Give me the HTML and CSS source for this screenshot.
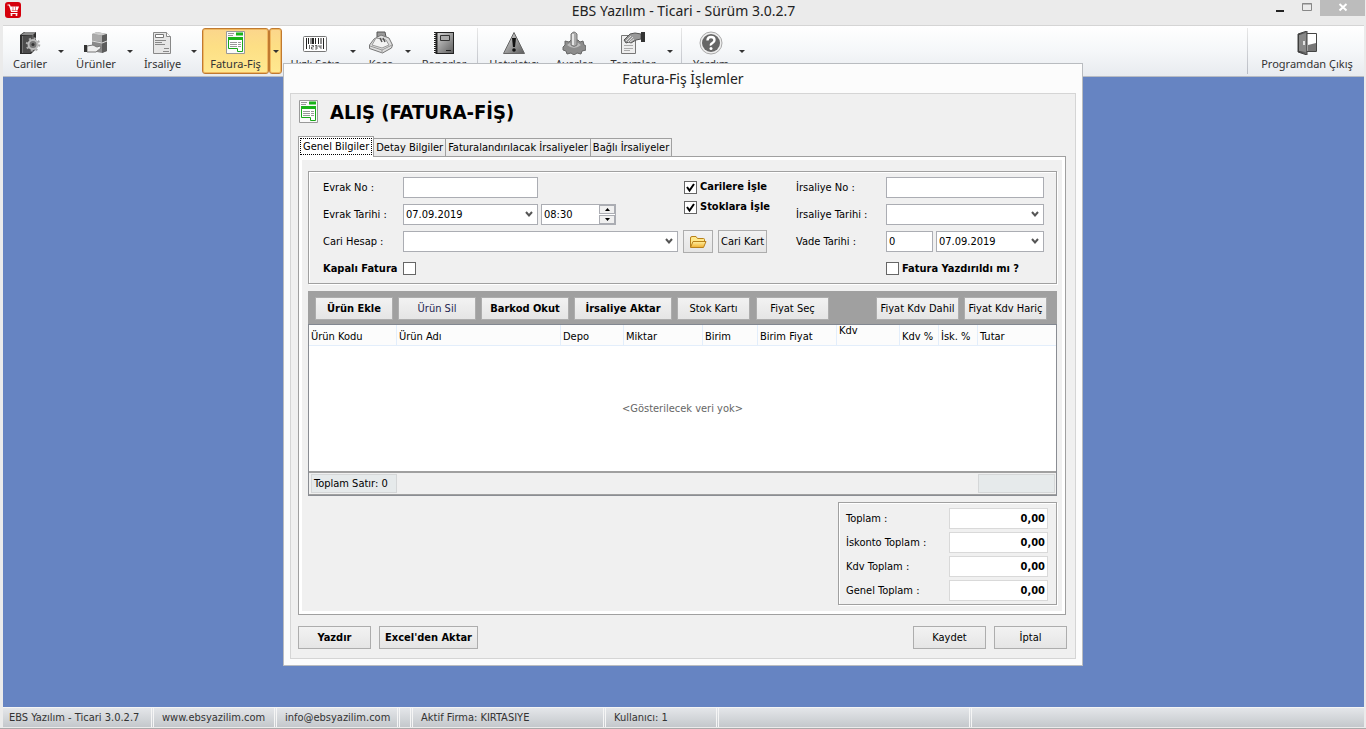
FILE: index.html
```html
<!DOCTYPE html>
<html lang="tr">
<head>
<meta charset="utf-8">
<title>EBS Yazılım - Ticari - Sürüm 3.0.2.7</title>
<link rel="stylesheet" href="styles.css">
</head>
<body>
<svg class="defs" aria-hidden="true">
  <defs>
    <linearGradient id="steel" x1="0" y1="0" x2="1" y2="1"><stop offset="0" stop-color="#dedede"/><stop offset="1" stop-color="#5c5c5c"/></linearGradient>
    <linearGradient id="dark" x1="0" y1="0" x2="1" y2="0"><stop offset="0" stop-color="#333"/><stop offset="1" stop-color="#777"/></linearGradient>
    <linearGradient id="gold" x1="0" y1="0" x2="0" y2="1"><stop offset="0" stop-color="#fff0a0"/><stop offset="1" stop-color="#f0b030"/></linearGradient>
    <symbol id="invoice" viewBox="0 0 20 24">
      <path d="M.5 .5h18v22H.5z" fill="#fafafa" stroke="#999"/>
      <path d="M2 2.500h6M2 4.500h5" stroke="#999"/>
      <path d="M10 1.500h7v3h-7z" fill="#19b219"/>
      <path d="M2.500 6.500h14v14h-5v-3h-9z" fill="#fff" stroke="#19a819"/>
      <path d="M2 7.500h15" stroke="#19b219" stroke-width="3"/>
      <path d="M4 11.500h7M4 13.500h7M4 15.500h7M12 11.500h3M12 13.500h3M12 15.500h3" stroke="#999"/>
    </symbol>
  </defs>
</svg>
<div class="window">
  <header class="titlebar">
    <svg class="app-icon" viewBox="0 0 16 16"><rect width="16" height="16" rx="3" fill="#d5000c"/><path d="M2.500 3h2l2 6.500h6" fill="none" stroke="#fff" stroke-width="1.200"/><path d="M5 4.500h9l-1.500 4H6.300z" fill="#fff"/><path d="M8 4.500v4M10.500 4.500v4" stroke="#d5000c" stroke-width=".5"/><path d="M5.500 11.500h7" stroke="#fff"/><circle cx="6.500" cy="13" r="1" fill="#fff"/><circle cx="11.500" cy="13" r="1" fill="#fff"/></svg>
    <h1 class="window-title">EBS Yazılım - Ticari - Sürüm 3.0.2.7</h1>
    <div class="window-buttons">
      <button class="win-btn" aria-label="Simge durumuna küçült"><svg viewBox="0 0 12 12"><path d="M2 9h8" stroke="#222" stroke-width="2"/></svg></button>
      <button class="win-btn" aria-label="Ekranı kapla"><svg viewBox="0 0 12 12"><path d="M1.500 1.500h9v7h-9zM1 2h10" fill="none" stroke="#888"/></svg></button>
      <button class="win-btn win-close" aria-label="Kapat"><svg viewBox="0 0 12 12"><path d="M2.500 2l7 6.500M9.500 2l-7 6.500" stroke="#fff" stroke-width="2"/></svg></button>
    </div>
  </header>

  <nav class="toolbar">
    <div class="tool"><button class="tool-main t-cariler"><svg viewBox="0 0 24 24"><path d="M2 4l4-3h12v17l-5 5H2z" fill="#2d2d2d"/><path d="M3 4l4-3h11l-3 3z" fill="#8a8a8a"/><path d="M4 5l11-1v16l-3 2H4z" fill="#4c4c4c"/><path d="M15 4v16M4.500 5v17" stroke="#777"/><circle cx="15" cy="13.500" r="6" fill="none" stroke="#aaa" stroke-width="2.500" stroke-dasharray="2 2.700"/><circle cx="15" cy="13.500" r="4.500" stroke="#bbb" stroke-width="2" fill="#777"/><circle cx="15" cy="13.500" r="1.500" fill="#333"/></svg><span>Cariler</span></button><button class="tool-drop" aria-label="Cariler menüsü"></button></div>
    <div class="tool"><button class="tool-main t-urunler"><svg viewBox="0 0 24 24"><path d="M8 3l5-2 10 2v17l-5 2-10-2z" fill="#888"/><path d="M8 3l5-2 10 2-5 1.500z" fill="#ccc"/><path d="M8 3l10 1.500V11L8 9.500z" fill="#aaa"/><path d="M8 11l10 1.500V21L8 20z" fill="#8a8a8a"/><path d="M18 4.500L23 3v17l-5 2z" fill="#5c5c5c"/><path d="M8 10l10 2 5-2" stroke="#ddd" fill="none"/><path d="M3 15l6-1 4 2 3-1 1 2-5 4H3z" fill="#eee" stroke="#777"/><path d="M0 14h3v7H0z" fill="#333"/></svg><span>Ürünler</span></button><button class="tool-drop" aria-label="Ürünler menüsü"></button></div>
    <div class="tool"><button class="tool-main t-irsaliye"><svg viewBox="0 0 24 24"><path d="M2.500 1.500h13l4 4v17h-17z" fill="#e6e6e6" stroke="#888"/><path d="M15.500 1.500v4h4" fill="#fff" stroke="#888"/><path d="M4.500 3.500h8v3h-8z" fill="#fff" stroke="#777"/><path d="M4 9.500h11M4 11.500h7M4 13.500h10M13 17.500h5M12 20.500h6" stroke="#888"/></svg><span>İrsaliye</span></button><button class="tool-drop" aria-label="İrsaliye menüsü"></button></div>
    <div class="tool active"><button class="tool-main t-fatura"><svg viewBox="0 0 20 24"><use href="#invoice"/></svg><span>Fatura-Fiş</span></button><button class="tool-drop" aria-label="Fatura-Fiş menüsü"></button></div>
    <div class="tool"><button class="tool-main t-satis"><svg viewBox="0 0 24 24"><rect x=".5" y="5.500" width="23" height="15" rx="1" fill="#fff" stroke="#777"/><path d="M3.500 7v11M5.500 7v6M8 7v6M12.500 7v6M15.500 7v6M18 7v6M20.500 7v11" stroke="#222"/><path d="M10 7v6" stroke="#222" stroke-width="2"/><path d="M6.500 14v4M8.500 14.500h2v1.500h-2v2h2M12 14.500h2v3.500h-2M12 16h2M16 14v2h2M18 14v4" fill="none" stroke="#444" stroke-width=".8"/></svg><span>Hızlı Satış</span></button><button class="tool-drop" aria-label="Hızlı Satış menüsü"></button></div>
    <div class="tool"><button class="tool-main t-kasa"><svg viewBox="0 0 24 24"><path d="M8 1h8l1 5H8z" fill="#999" stroke="#555"/><path d="M5 8l7-4 8 3 3.500 7-1 3-9 5L.5 17.500V14z" fill="#ddd" stroke="#777"/><path d="M1 15l12 4 10-5M13 19v3" stroke="#999" fill="none"/><path d="M7 7l10 2 3 5-7 3-10-3z" fill="#f3f3f3" stroke="#999"/><path d="M11 7l2 4M14 7l2 4" stroke="#555" stroke-width="1.500"/></svg><span>Kasa</span></button><button class="tool-drop" aria-label="Kasa menüsü"></button></div>
    <div class="tool"><button class="tool-main t-raporlar"><svg viewBox="0 0 24 24"><rect x="2.500" y="1.500" width="19" height="21" fill="url(#steel)" stroke="#222"/><path d="M4 1v22" stroke="#222" stroke-width="3"/><path d="M2 2v21" stroke="#fff" stroke-width="3" stroke-dasharray="1 1"/><path d="M8.500 4.500h9v5h-9z" fill="#aaa" stroke="#333"/><path d="M14 19.500h5" stroke="#222"/></svg><span>Raporlar</span></button></div>
    <div class="tool-sep"></div>
    <div class="tool"><button class="tool-main t-hatir"><svg viewBox="0 0 24 24"><path d="M12 1.500l10.500 21h-21z" fill="url(#steel)" stroke="#666" stroke-linejoin="round"/><path d="M10 7h4l-1 9h-2z" fill="#111"/><circle cx="12" cy="19" r="1.800" fill="#111"/></svg><span>Hatırlatıcı</span></button></div>
    <div class="tool"><button class="tool-main t-ayarlar"><svg viewBox="0 0 24 24"><path d="M3 10l4 1 2-2h7l2 2 3-1 1 4 2 1v4l-4 1-1 3-4-1-3 2-3-2-4 1-1-3-3-1v-3l2-2z" fill="#8c8c8c" stroke="#666"/><path d="M5 14q7-7 14 0-7 6-14 0z" fill="#bbb"/><path d="M9 3q3-4 6 0v11q-3 3-6 0z" fill="#aaa" stroke="#777"/><path d="M11 3v11" stroke="#e5e5e5" stroke-width="2"/></svg><span>Ayarlar</span></button></div>
    <div class="tool"><button class="tool-main t-tanimlar"><svg viewBox="0 0 24 24"><path d="M.5 4.500h14v18H.5z" fill="#eee" stroke="#777"/><path d="M3 14.500h9M3 17.500h9M3 19.500h6" stroke="#aaa"/><path d="M3 9l6-6 5-1 6 1v5l-5 1-5 3-2-1-3 1z" fill="#999" stroke="#555"/><path d="M5 10l5-5M7 11l5-5M9 11l4-3" stroke="#ddd"/><path d="M20 1h4v10h-4z" fill="#333"/></svg><span>Tanımlar</span></button><button class="tool-drop" aria-label="Tanımlar menüsü"></button></div>
    <div class="tool-sep"></div>
    <div class="tool"><button class="tool-main t-yardim"><svg viewBox="0 0 24 24"><circle cx="12" cy="12" r="11" fill="#eee" stroke="#aaa"/><circle cx="12" cy="12" r="9" fill="#666"/><path d="M8.500 9.500q0-3.500 3.500-3.500t3.500 3q0 2-2 3t-1.500 2.500" fill="none" stroke="#fff" stroke-width="2.400"/><circle cx="12" cy="17.500" r="1.500" fill="#fff"/></svg><span>Yardım</span></button><button class="tool-drop" aria-label="Yardım menüsü"></button></div>
    <div class="tool-sep push"></div>
    <div class="tool"><button class="tool-main t-cikis"><svg viewBox="0 0 24 24"><path d="M11 2.500h10.500v18H11z" fill="#fff" stroke="#444"/><path d="M13 14l8-2v8h-8z" fill="#777"/><path d="M3 3l9-3v24l-9-3z" fill="url(#dark)" stroke="#444"/><path d="M4 4l7-2v19l-7-1z" fill="#888"/><path d="M9 10v4" stroke="#fff" stroke-width="1.500"/></svg><span>Programdan Çıkış</span></button></div>
  </nav>

  <main class="desktop"></main>

  <footer class="statusbar">
    <span class="st-version">EBS Yazılım - Ticari 3.0.2.7</span>
    <span class="st-web">www.ebsyazilim.com</span>
    <span class="st-web">info@ebsyazilim.com</span>
    <span class="st-blank"></span>
    <span class="st-firm">Aktif Firma: KIRTASIYE</span>
    <span class="st-user">Kullanıcı: 1</span>
    <span class="st-wide"></span>
  </footer>

  <section class="dialog" role="dialog" aria-labelledby="dlg-title">
    <h2 class="dialog-title" id="dlg-title">Fatura-Fiş İşlemler</h2>
    <div class="dialog-body">
      <div class="heading"><svg viewBox="0 0 20 24"><use href="#invoice"/></svg><h3>ALIŞ (FATURA-FİŞ)</h3></div>
      <div class="tabs" role="tablist">
        <button class="tab selected" role="tab" aria-selected="true"><span>Genel Bilgiler</span></button>
        <button class="tab" role="tab">Detay Bilgiler</button>
        <button class="tab" role="tab">Faturalandırılacak İrsaliyeler</button>
        <button class="tab" role="tab">Bağlı İrsaliyeler</button>
      </div>
      <div class="tab-page">
        <form class="fields">
          <div class="fields-left">
            <label for="evrak-no">Evrak No :</label>
            <div class="cell"><input class="w-date" id="evrak-no" type="text"></div>
            <label for="evrak-tarihi">Evrak Tarihi :</label>
            <div class="cell">
              <select class="w-date" id="evrak-tarihi"><option>07.09.2019</option></select>
              <div class="spinner"><input type="text" value="08:30" aria-label="Evrak saati"><div class="spin-buttons"><button type="button" aria-label="Artır"><svg viewBox="0 0 5 3"><path d="M0 3h5L2.500 0z"/></svg></button><button type="button" aria-label="Azalt"><svg viewBox="0 0 5 3"><path d="M0 0h5L2.500 3z"/></svg></button></div></div>
            </div>
            <label for="cari-hesap">Cari Hesap :</label>
            <div class="cell"><select class="w-full" id="cari-hesap"><option></option></select></div>
            <label class="strong" for="kapali">Kapalı Fatura</label>
            <div class="cell"><input id="kapali" type="checkbox"></div>
            <div class="checks">
              <label class="check"><input type="checkbox" checked>Carilere İşle</label>
              <label class="check"><input type="checkbox" checked>Stoklara İşle</label>
            </div>
            <div class="account-buttons">
              <button class="btn folder" type="button" aria-label="Cari seç"><svg viewBox="0 0 18 14"><path d="M1.500 12V3q0-1.500 1.500-1.500h4l1.500 2h6q1 0 1 1V6" fill="#ffe88a" stroke="#b8801a"/><path d="M1.500 12.500L4 6.500h13l-2.500 6z" fill="url(#gold)" stroke="#b8801a" stroke-linejoin="round"/></svg></button>
              <button class="btn" type="button">Cari Kart</button>
            </div>
          </div>
          <div class="fields-right">
            <label for="irsaliye-no">İrsaliye No :</label>
            <div class="cell"><input class="w-full" id="irsaliye-no" type="text"></div>
            <label for="irsaliye-tarihi">İrsaliye Tarihi :</label>
            <div class="cell"><select class="w-full" id="irsaliye-tarihi"><option></option></select></div>
            <label for="vade">Vade Tarihi :</label>
            <div class="cell"><input class="w-days" id="vade" type="text" value="0"><select class="w-rest" aria-label="Vade tarihi"><option>07.09.2019</option></select></div>
            <label class="check printed"><input type="checkbox">Fatura Yazdırıldı mı ?</label>
          </div>
        </form>

        <div class="grid">
          <div class="grid-tools">
            <button class="btn strong g-78">Ürün Ekle</button>
            <button class="btn blue g-78">Ürün Sil</button>
            <button class="btn strong g-88">Barkod Okut</button>
            <button class="btn strong g-98">İrsaliye Aktar</button>
            <button class="btn g-73">Stok Kartı</button>
            <button class="btn g-73">Fiyat Seç</button>
            <span class="grid-tools-gap"></span>
            <button class="btn g-83">Fiyat Kdv Dahil</button>
            <button class="btn g-83">Fiyat Kdv Hariç</button>
          </div>
          <table>
            <colgroup><col class="c-kod"><col class="c-ad"><col class="c-depo"><col class="c-miktar"><col class="c-birim"><col class="c-miktar"><col class="c-depo"><col class="c-oran"><col class="c-oran"><col></colgroup>
            <thead><tr><th>Ürün Kodu</th><th>Ürün Adı</th><th>Depo</th><th>Miktar</th><th>Birim</th><th>Birim Fiyat</th><th class="high">Kdv</th><th>Kdv %</th><th>İsk. %</th><th>Tutar</th></tr></thead>
            <tbody><tr><td colspan="10">&lt;Gösterilecek veri yok&gt;</td></tr></tbody>
          </table>
          <div class="grid-footer"><span class="count">Toplam Satır: 0</span><span class="sum"></span></div>
        </div>

        <div class="totals">
          <label for="t1">Toplam :</label><input id="t1" type="text" value="0,00">
          <label for="t2">İskonto Toplam :</label><input id="t2" type="text" value="0,00">
          <label for="t3">Kdv Toplam :</label><input id="t3" type="text" value="0,00">
          <label for="t4">Genel Toplam :</label><input id="t4" type="text" value="0,00">
        </div>
      </div>
      <div class="actions">
        <button class="btn strong a-73">Yazdır</button>
        <button class="btn strong a-99">Excel'den Aktar</button>
        <button class="btn a-73 push">Kaydet</button>
        <button class="btn a-73">İptal</button>
      </div>
    </div>
  </section>
</div>
</body>
</html>
```
FILE: styles.css
```css
* { box-sizing: border-box; }
body { margin: 0; font: 11px/14px "DejaVu Sans Condensed", "DejaVu Sans", sans-serif; color: #000; background: #ebebeb; }
button, input, select { font: inherit; color: inherit; margin: 0; padding: 0; border-radius: 0; }
button { white-space: nowrap; }
label { white-space: nowrap; }
h1, h2, h3 { margin: 0; font-weight: normal; }
.defs { position: absolute; width: 0; height: 0; }
.strong { font-weight: bold; }
.push { margin-left: auto; }

.window { position: relative; display: flex; flex-direction: column; min-height: 100vh; padding: 0 2px 1px 3px; border-bottom: 1px solid #aaa; }

/* title bar */
.titlebar { display: grid; grid-template-columns: 1fr auto 1fr; align-items: start; height: 25px; }
.app-icon { width: 16px; height: 16px; margin: 2px; }
.window-title { font: 14px/22px "Noto Sans", sans-serif; color: #222; }
.window-buttons { display: flex; justify-content: flex-end; margin-right: -1px; }
.win-btn { width: 27px; height: 16px; border: 0; background: none; }
.win-btn svg { width: 12px; height: 12px; display: block; margin: auto; }
.win-close { width: 45px; background: #bcbcbc; }

/* toolbar */
.toolbar { display: flex; gap: 2px; height: 52px; padding: 2px 3px; background: linear-gradient(#fff, #f5f7f9 50%, #e8ebef); border-top: 1px solid #d5d5d5; border-bottom: 1px solid #b8bcc4; }
.tool { display: flex; }
.tool-main { display: flex; flex-direction: column; align-items: center; gap: 1px; padding: 2px 0 0; border: 1px solid transparent; background: none; font: 11px/16px "Noto Sans", sans-serif; color: #333; }
.tool-main svg { width: 24px; height: 24px; }
.tool-drop { width: 13px; border: 1px solid transparent; background: none; display: grid; place-items: center; }
.tool-drop::before { content: ""; border: 3px solid transparent; border-top-color: #333; border-bottom: 0; }
.active .tool-main, .active .tool-drop { border-color: #c07a30; border-radius: 3px; background: linear-gradient(#fbd68c, #fddf85 40%, #ffe890); box-shadow: inset 0 0 0 1px #f0b860; }
.tool-sep { width: 1px; margin: 0 3px; background: linear-gradient(#e8e8e8, #b8bcc4); }
.tool-sep.push { margin-left: auto; }
.t-cariler, .t-yardim { width: 48px; }
.t-urunler, .t-ayarlar { width: 54px; }
.t-irsaliye { width: 49px; }
.t-fatura { width: 67px; }
.t-satis, .t-hatir { width: 62px; }
.t-kasa { width: 40px; }
.t-raporlar { width: 56px; }
.t-tanimlar { width: 60px; }
.t-cikis { width: 108px; }

.desktop { flex: 1; background: #6684c2; }

/* status bar */
.statusbar { display: flex; height: 20px; line-height: 20px; color: #333; background: linear-gradient(#e4e6e9, #c4c8cc); border-top: 1px solid #f5f5f5; }
.statusbar span { padding-left: 8px; border-right: 3px double #f5f5f5; white-space: nowrap; }
.statusbar .st-version { width: 151px; padding-left: 6px; }
.st-web { width: 123px; }
.st-blank { width: 13px; }
.st-firm { width: 193px; }
.st-user { width: 113px; }
.st-wide { width: 253px; }

/* dialog window */
.dialog { position: absolute; top: 63px; left: calc(50% - 400px); width: 800px; padding: 0 6px 6px; background: #fcfcfc; border: 1px solid #b9bcc0; }
.dialog-title { font: 14px/29px "Noto Sans", sans-serif; text-align: center; color: #222; }
.dialog-body { padding: 4px 8px 9px 7px; background: #f0f0f0; border: 1px solid #d5d5d5; }
.heading { display: flex; align-items: center; gap: 11px; height: 28px; padding-left: 1px; }
.heading svg { width: 20px; height: 24px; }
.heading h3 { font: bold 20px/28px "DejaVu Sans Condensed", "DejaVu Sans", sans-serif; }

.tabs { display: flex; align-items: flex-end; height: 20px; margin-top: 10px; }
.tab { height: 18px; padding: 0 2px; border: 1px solid #a0a0a0; border-bottom: 0; border-left-width: 0; background: linear-gradient(#f2f2f2, #e8e8e8); }
.tab.selected { height: 21px; margin-bottom: -1px; padding: 1px; border-left-width: 1px; background: #fff; z-index: 1; }
.tab.selected span { display: block; padding: 0 2px; margin-bottom: 1px; border: 1px dotted #000; line-height: 15px; }
.tab-page { margin-right: 1px; padding: 14px 8px 9px 9px; border: 1px solid #a0a0a0; outline: 3px solid #fff; outline-offset: -4px; }

/* form */
.fields { display: flex; padding: 2px 12px 1px 14px; border: 1px solid #a0a0a0; box-shadow: 1px 1px #fff, inset 1px 1px #fff; }
.fields-left { display: grid; grid-template-columns: 80px 275px 1fr; grid-template-rows: repeat(4, 27px); align-items: center; flex: 1; }
.fields-left > label { grid-column: 1; }
.fields-left > .cell { grid-column: 2; }
.fields-right { display: grid; grid-template-columns: 90px 158px; grid-template-rows: repeat(4, 27px); align-items: center; }
.cell { display: flex; gap: 3px; }
input[type="text"], select { height: 21px; border: 1px solid #abadb3; background-color: #fff; padding: 0 2px; min-width: 0; }
select { appearance: none; background: #fff url("data:image/svg+xml,%3Csvg xmlns='http://www.w3.org/2000/svg' width='8' height='7'%3E%3Cpath d='M1 1l3 3.500L7 1' fill='none' stroke='%23555' stroke-width='2'/%3E%3C/svg%3E") no-repeat right 4px center; }
.w-date { width: 135px; }
.w-full { width: 100%; }
.w-days { width: 47px; }
.w-rest { flex: 1; }
input[type="checkbox"] { appearance: none; width: 13px; height: 13px; border: 1px solid #666; background: #fff; }
input[type="checkbox"]:checked { background: #fff url("data:image/svg+xml,%3Csvg xmlns='http://www.w3.org/2000/svg' width='11' height='11'%3E%3Cpath d='M2 5l2.500 3.500L9 2' fill='none' stroke='%23000' stroke-width='2'/%3E%3C/svg%3E"); }
.spinner { display: flex; width: 75px; height: 21px; border: 1px solid #abadb3; background: #fff; }
.spinner input[type="text"] { flex: 1; height: 19px; border: 0; }
.spin-buttons { display: flex; flex-direction: column; width: 16px; gap: 1px; }
.spin-buttons button { flex: 1; display: grid; place-items: center; border: 1px solid #abadb3; background: #f0f0f0; }
.spin-buttons svg { width: 5px; height: 3px; }
.check { display: flex; align-items: center; gap: 3px; font-weight: bold; }
.checks { grid-column: 3; grid-row: 1 / 3; align-self: start; display: grid; gap: 6px; padding: 6px 0 0 6px; }
.account-buttons { grid-column: 3; grid-row: 3; display: flex; gap: 5px; padding-left: 5px; }
.printed { grid-column: 2; }
.btn { height: 23px; padding: 0 2px; border: 1px solid #adadad; background: linear-gradient(#f2f2f2, #e5e5e5); }
.folder { width: 30px; display: grid; place-items: center; }
.folder svg { width: 18px; height: 14px; }

/* line items */
.grid { margin-top: 7px; border: 1px solid #8a8d93; border-top: 0; background: #fff; }
.grid-tools { display: flex; gap: 5px; margin: 0 -1px; padding: 6px 10px 4px 7px; background: #a0a0a0; border-bottom: 1px solid #828790; }
.grid-tools-gap { flex: 1; }
.blue { color: #1e1e50; }
.g-78 { width: 78px; }
.g-88 { width: 88px; }
.g-98 { width: 98px; }
.g-73 { width: 73px; margin-right: 1px; }
.g-83 { width: 83px; }
table { width: 100%; table-layout: fixed; border-collapse: separate; border-spacing: 0; }
th { height: 21px; padding: 3px 2px 0; text-align: left; font-weight: normal; vertical-align: middle; white-space: nowrap; background: #fcfcfc; border-right: 1px solid #e3eefb; border-bottom: 1px solid #e3eefb; }
th:last-child { border-right: 0; }
th.high { vertical-align: top; padding-top: 0; line-height: 11px; }
td { height: 125px; padding: 0; text-align: center; color: #666; }
.c-kod { width: 88px; }
.c-ad { width: 164px; }
.c-depo { width: 63px; }
.c-miktar { width: 79px; }
.c-birim { width: 55px; }
.c-oran { width: 39px; }
.grid-footer { display: flex; justify-content: space-between; padding: 1px 1px 1px 2px; background: #f0f0f0; border-top: 2px solid #a0a0a0; border-bottom: 1px solid #a0a0a0; }
.grid-footer span { height: 19px; padding: 0 2px; line-height: 18px; background: #e6eaeb; border: 1px solid #d5d7d8; }
.count { width: 86px; white-space: nowrap; }
.sum { width: 77px; }

.totals { display: grid; grid-template-columns: 1fr 99px; row-gap: 3px; align-items: center; width: 219px; margin: 6px 0 0 auto; padding: 5px 8px 3px 7px; border: 1px solid #a0a0a0; box-shadow: 1px 1px #fff, inset 1px 1px #fff; }
.totals input[type="text"] { width: 100%; border-color: #d9d9d9; text-align: right; font-weight: bold; }

.actions { display: flex; gap: 8px; padding-top: 11px; }
.a-73 { width: 73px; }
.a-99 { width: 99px; }
```
